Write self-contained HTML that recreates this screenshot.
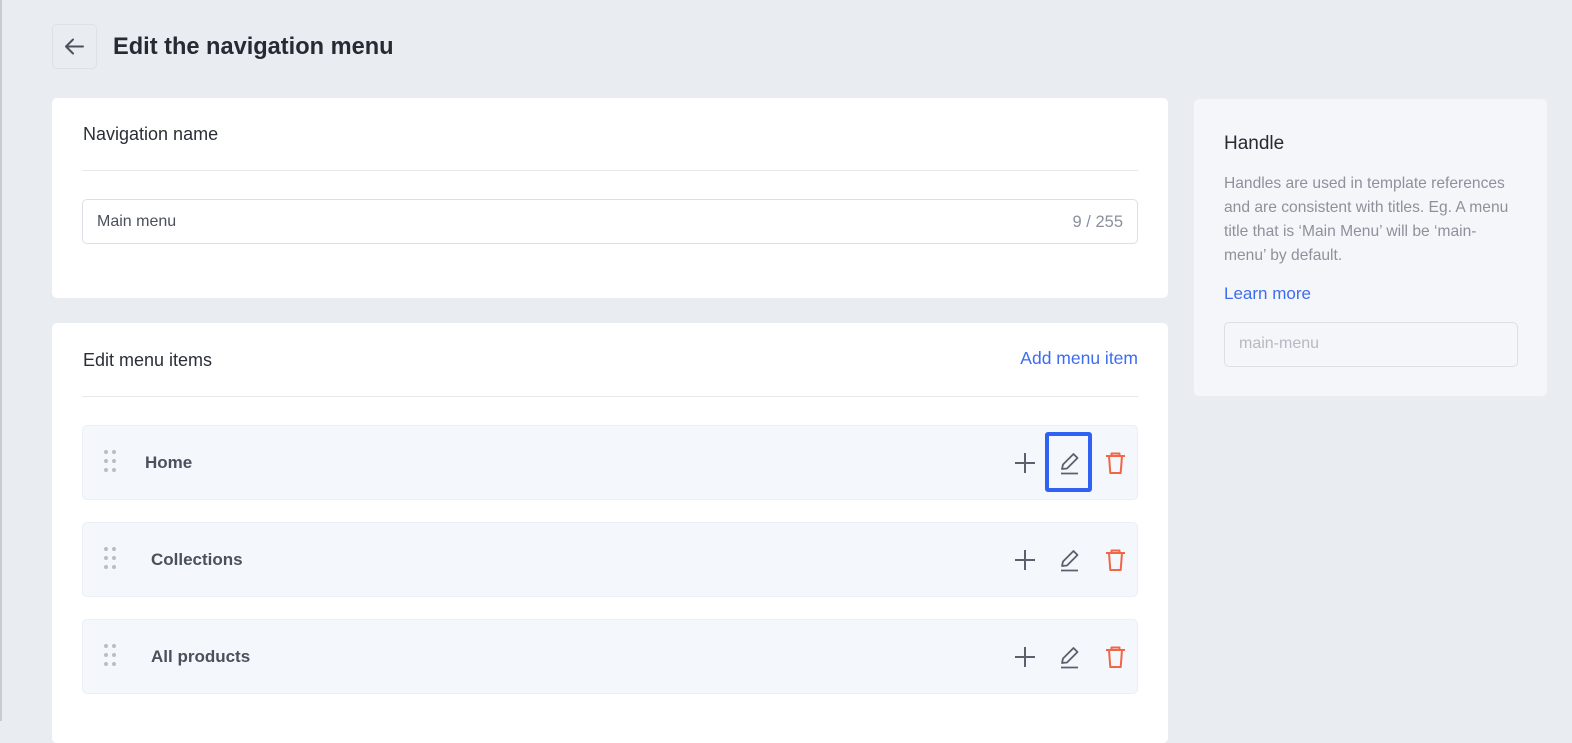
<!DOCTYPE html>
<html><head><style>
*{box-sizing:border-box;margin:0;padding:0}
body{width:1572px;height:721px;overflow:hidden;background:#e9ecf1;font-family:"Liberation Sans",sans-serif;position:relative;color:#1f2430}
.abs{position:absolute}
.edge{left:0;top:0;width:2px;height:721px;background:#c9ccd2}
.back{left:52px;top:24px;width:45px;height:45px;border:1px solid #dde1e7;border-radius:5px;background:#e9ecf1}
.title{left:113px;top:34px;font-size:23.6px;font-weight:bold;color:#262a33}
.card{background:#fff;border-radius:5px}
.h{font-size:18px;color:#2a2e37}
.div{height:1px;background:#e6e8ec}
.input{border:1px solid #dcdfe6;border-radius:5px}
.row{left:82px;width:1056px;height:75px;background:#f4f7fc;border:1px solid #ebeef4;border-radius:5px}
.row .lbl{position:absolute;top:27px;font-size:17px;font-weight:bold;color:#4a505c}
.dots{position:absolute;left:21px;top:24px}
.dots i{position:absolute;width:4px;height:4px;border-radius:50%;background:#b8bdc7}
.ic{position:absolute;top:25px}
</style></head><body>
<div class="abs edge"></div>
<div class="abs back"><svg width="45" height="45" style="position:absolute;left:-1px;top:-1px"><path d="M14 22.5H31M14 22.5L21 15.5M14 22.5L21 29.5" stroke="#4a505c" stroke-width="2" fill="none" stroke-linecap="round"/></svg></div>
<div class="abs title">Edit the navigation menu</div>

<div class="abs card" style="left:52px;top:98px;width:1116px;height:200px"></div>
<div class="abs h" style="left:83px;top:124px">Navigation name</div>
<div class="abs div" style="left:82px;top:170px;width:1056px"></div>
<div class="abs input" style="left:82px;top:199px;width:1056px;height:45px;background:#fff"></div>
<div class="abs" style="left:97px;top:213px;font-size:16px;color:#4a505c">Main menu</div>
<div class="abs" style="right:449px;top:213px;font-size:16.5px;color:#8a909c">9 / 255</div>

<div class="abs card" style="left:52px;top:323px;width:1116px;height:420px"></div>
<div class="abs h" style="left:83px;top:350px">Edit menu items</div>
<div class="abs" style="right:434px;top:348px;font-size:17.5px;color:#3c6cf0">Add menu item</div>
<div class="abs div" style="left:82px;top:396px;width:1056px"></div>

<div class="abs row" style="top:425px"><div class="dots"><i style="left:0;top:0"></i><i style="left:8px;top:0"></i><i style="left:0;top:9px"></i><i style="left:8px;top:9px"></i><i style="left:0;top:18px"></i><i style="left:8px;top:18px"></i></div><div class="lbl" style="left:62px">Home</div>
<svg class="ic" style="left:930px" width="24" height="24"><path d="M12 2V22M2 12H22" stroke="#5a606c" stroke-width="2"/></svg>
<svg class="ic" style="left:975px" width="24" height="24"><path d="M4 18L5 13.5L15.5 3L19.5 7L9 17.5L4 18Z" stroke="#5a606c" stroke-width="1.8" fill="none" stroke-linejoin="round"/><path d="M3 22.5H20" stroke="#5a606c" stroke-width="1.8"/></svg>
<svg class="ic" style="left:1021px" width="24" height="24"><path d="M2 5H21M7.5 5V2.5H15.5V5M5 5L6.3 22H16.7L18 5" stroke="#f16646" stroke-width="2" fill="none" stroke-linejoin="round"/></svg>
</div>
<div class="abs row" style="top:522px"><div class="dots"><i style="left:0;top:0"></i><i style="left:8px;top:0"></i><i style="left:0;top:9px"></i><i style="left:8px;top:9px"></i><i style="left:0;top:18px"></i><i style="left:8px;top:18px"></i></div><div class="lbl" style="left:68px">Collections</div>
<svg class="ic" style="left:930px" width="24" height="24"><path d="M12 2V22M2 12H22" stroke="#5a606c" stroke-width="2"/></svg>
<svg class="ic" style="left:975px" width="24" height="24"><path d="M4 18L5 13.5L15.5 3L19.5 7L9 17.5L4 18Z" stroke="#5a606c" stroke-width="1.8" fill="none" stroke-linejoin="round"/><path d="M3 22.5H20" stroke="#5a606c" stroke-width="1.8"/></svg>
<svg class="ic" style="left:1021px" width="24" height="24"><path d="M2 5H21M7.5 5V2.5H15.5V5M5 5L6.3 22H16.7L18 5" stroke="#f16646" stroke-width="2" fill="none" stroke-linejoin="round"/></svg>
</div>
<div class="abs row" style="top:619px"><div class="dots"><i style="left:0;top:0"></i><i style="left:8px;top:0"></i><i style="left:0;top:9px"></i><i style="left:8px;top:9px"></i><i style="left:0;top:18px"></i><i style="left:8px;top:18px"></i></div><div class="lbl" style="left:68px">All products</div>
<svg class="ic" style="left:930px" width="24" height="24"><path d="M12 2V22M2 12H22" stroke="#5a606c" stroke-width="2"/></svg>
<svg class="ic" style="left:975px" width="24" height="24"><path d="M4 18L5 13.5L15.5 3L19.5 7L9 17.5L4 18Z" stroke="#5a606c" stroke-width="1.8" fill="none" stroke-linejoin="round"/><path d="M3 22.5H20" stroke="#5a606c" stroke-width="1.8"/></svg>
<svg class="ic" style="left:1021px" width="24" height="24"><path d="M2 5H21M7.5 5V2.5H15.5V5M5 5L6.3 22H16.7L18 5" stroke="#f16646" stroke-width="2" fill="none" stroke-linejoin="round"/></svg>
</div>
<div class="abs" style="left:1045px;top:432px;width:47px;height:60px;border:4px solid #2f62f2;border-radius:3px"></div>

<div class="abs" style="left:1194px;top:99px;width:353px;height:297px;background:#f5f6f9;border-radius:5px"></div>
<div class="abs" style="left:1224px;top:133px;font-size:19px;color:#262a33">Handle</div>
<div class="abs" style="left:1224px;top:172px;width:320px;font-size:15.6px;line-height:24px;color:#8c919c;white-space:nowrap">Handles are used in template references<br>and are consistent with titles. Eg. A menu<br>title that is ‘Main Menu’ will be ‘main-<br>menu’ by default.</div>
<div class="abs" style="left:1224px;top:284px;font-size:17px;color:#3c6cf0">Learn more</div>
<div class="abs input" style="left:1224px;top:322px;width:294px;height:45px"></div>
<div class="abs" style="left:1239px;top:335px;font-size:16px;color:#b5b9c2">main-menu</div>
</body></html>
